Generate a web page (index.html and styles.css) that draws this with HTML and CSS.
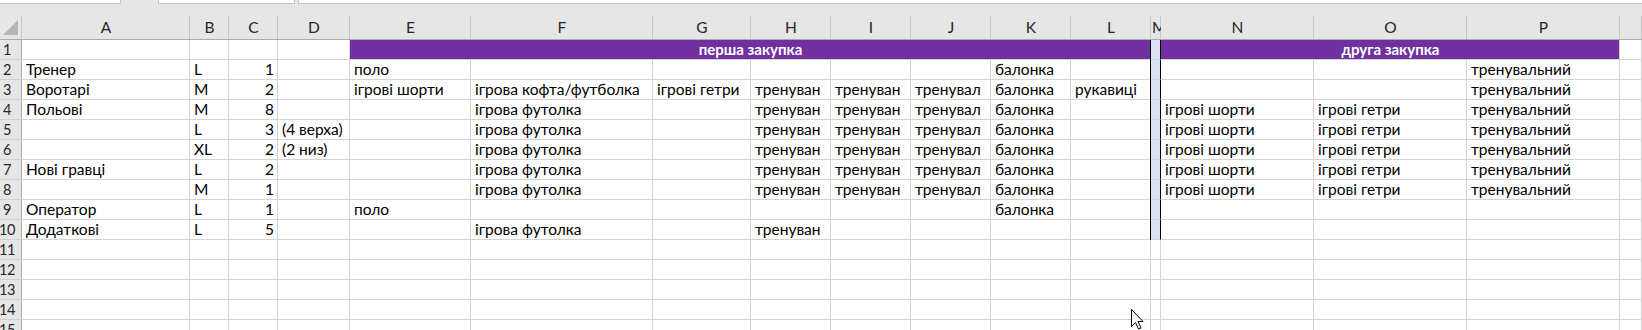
FILE: index.html
```html
<!DOCTYPE html>
<html lang="uk">
<head>
<meta charset="utf-8">
<title>Sheet</title>
<link rel="stylesheet" href="styles.css">
</head>
<body>
<div class="tabs"><div class="tab t1"></div><div class="tab t2"></div><div class="tab t3"></div></div>
<div class="sheet">
<div class="h corner"><svg width="16" height="16" viewBox="0 0 16 16"><polygon points="15,0 15,15 0,15" fill="#b5b5b5"/></svg></div><div class="h">A</div><div class="h">B</div><div class="h">C</div><div class="h">D</div><div class="h">E</div><div class="h">F</div><div class="h">G</div><div class="h">H</div><div class="h">I</div><div class="h">J</div><div class="h">K</div><div class="h">L</div><div class="h hm">M</div><div class="h">N</div><div class="h">O</div><div class="h">P</div><div class="h"></div>

<div class="rh"><span>1</span></div><div class="c"></div><div class="c"></div><div class="c"></div><div class="c"></div><div class="c p p8">перша закупка</div><div class="c s"></div><div class="c p p3">друга закупка</div><div class="c"></div>

<div class="rh"><span>2</span></div><div class="c">Тренер</div><div class="c">L</div><div class="c n">1</div><div class="c"></div><div class="c">поло</div><div class="c"></div><div class="c"></div><div class="c"></div><div class="c"></div><div class="c"></div><div class="c">балонка</div><div class="c"></div><div class="c s"></div><div class="c"></div><div class="c"></div><div class="c">тренувальний</div><div class="c"></div>

<div class="rh"><span>3</span></div><div class="c">Воротарі</div><div class="c">M</div><div class="c n">2</div><div class="c"></div><div class="c">ігрові шорти</div><div class="c">ігрова кофта/футболка</div><div class="c">ігрові гетри</div><div class="c">тренуван</div><div class="c">тренуван</div><div class="c">тренувал</div><div class="c">балонка</div><div class="c">рукавиці</div><div class="c s"></div><div class="c"></div><div class="c"></div><div class="c">тренувальний</div><div class="c"></div>

<div class="rh"><span>4</span></div><div class="c">Польові</div><div class="c">M</div><div class="c n">8</div><div class="c"></div><div class="c"></div><div class="c">ігрова футолка</div><div class="c"></div><div class="c">тренуван</div><div class="c">тренуван</div><div class="c">тренувал</div><div class="c">балонка</div><div class="c"></div><div class="c s"></div><div class="c">ігрові шорти</div><div class="c">ігрові гетри</div><div class="c">тренувальний</div><div class="c"></div>

<div class="rh"><span>5</span></div><div class="c"></div><div class="c">L</div><div class="c n">3</div><div class="c">(4 верха)</div><div class="c"></div><div class="c">ігрова футолка</div><div class="c"></div><div class="c">тренуван</div><div class="c">тренуван</div><div class="c">тренувал</div><div class="c">балонка</div><div class="c"></div><div class="c s"></div><div class="c">ігрові шорти</div><div class="c">ігрові гетри</div><div class="c">тренувальний</div><div class="c"></div>

<div class="rh"><span>6</span></div><div class="c"></div><div class="c">XL</div><div class="c n">2</div><div class="c">(2 низ)</div><div class="c"></div><div class="c">ігрова футолка</div><div class="c"></div><div class="c">тренуван</div><div class="c">тренуван</div><div class="c">тренувал</div><div class="c">балонка</div><div class="c"></div><div class="c s"></div><div class="c">ігрові шорти</div><div class="c">ігрові гетри</div><div class="c">тренувальний</div><div class="c"></div>

<div class="rh"><span>7</span></div><div class="c">Нові гравці</div><div class="c">L</div><div class="c n">2</div><div class="c"></div><div class="c"></div><div class="c">ігрова футолка</div><div class="c"></div><div class="c">тренуван</div><div class="c">тренуван</div><div class="c">тренувал</div><div class="c">балонка</div><div class="c"></div><div class="c s"></div><div class="c">ігрові шорти</div><div class="c">ігрові гетри</div><div class="c">тренувальний</div><div class="c"></div>

<div class="rh"><span>8</span></div><div class="c"></div><div class="c">M</div><div class="c n">1</div><div class="c"></div><div class="c"></div><div class="c">ігрова футолка</div><div class="c"></div><div class="c">тренуван</div><div class="c">тренуван</div><div class="c">тренувал</div><div class="c">балонка</div><div class="c"></div><div class="c s"></div><div class="c">ігрові шорти</div><div class="c">ігрові гетри</div><div class="c">тренувальний</div><div class="c"></div>

<div class="rh"><span>9</span></div><div class="c">Оператор</div><div class="c">L</div><div class="c n">1</div><div class="c"></div><div class="c">поло</div><div class="c"></div><div class="c"></div><div class="c"></div><div class="c"></div><div class="c"></div><div class="c">балонка</div><div class="c"></div><div class="c s"></div><div class="c"></div><div class="c"></div><div class="c"></div><div class="c"></div>

<div class="rh"><span>10</span></div><div class="c">Додаткові</div><div class="c">L</div><div class="c n">5</div><div class="c"></div><div class="c"></div><div class="c">ігрова футолка</div><div class="c"></div><div class="c">тренуван</div><div class="c"></div><div class="c"></div><div class="c"></div><div class="c"></div><div class="c s"></div><div class="c"></div><div class="c"></div><div class="c"></div><div class="c"></div>

<div class="rh"><span>11</span></div><div class="c"></div><div class="c"></div><div class="c"></div><div class="c"></div><div class="c"></div><div class="c"></div><div class="c"></div><div class="c"></div><div class="c"></div><div class="c"></div><div class="c"></div><div class="c"></div><div class="c"></div><div class="c"></div><div class="c"></div><div class="c"></div><div class="c"></div>

<div class="rh"><span>12</span></div><div class="c"></div><div class="c"></div><div class="c"></div><div class="c"></div><div class="c"></div><div class="c"></div><div class="c"></div><div class="c"></div><div class="c"></div><div class="c"></div><div class="c"></div><div class="c"></div><div class="c"></div><div class="c"></div><div class="c"></div><div class="c"></div><div class="c"></div>

<div class="rh"><span>13</span></div><div class="c"></div><div class="c"></div><div class="c"></div><div class="c"></div><div class="c"></div><div class="c"></div><div class="c"></div><div class="c"></div><div class="c"></div><div class="c"></div><div class="c"></div><div class="c"></div><div class="c"></div><div class="c"></div><div class="c"></div><div class="c"></div><div class="c"></div>

<div class="rh"><span>14</span></div><div class="c"></div><div class="c"></div><div class="c"></div><div class="c"></div><div class="c"></div><div class="c"></div><div class="c"></div><div class="c"></div><div class="c"></div><div class="c"></div><div class="c"></div><div class="c"></div><div class="c"></div><div class="c"></div><div class="c"></div><div class="c"></div><div class="c"></div>

<div class="rh"><span>15</span></div><div class="c"></div><div class="c"></div><div class="c"></div><div class="c"></div><div class="c"></div><div class="c"></div><div class="c"></div><div class="c"></div><div class="c"></div><div class="c"></div><div class="c"></div><div class="c"></div><div class="c"></div><div class="c"></div><div class="c"></div><div class="c"></div><div class="c"></div>
</div>
<svg class="cursor" width="13" height="21" viewBox="0 0 13 21"><path d="M0.5 0.5 L0.5 17.5 L4.5 13.5 L7.5 20 L10 19 L7 12.5 L12 12.5 Z" fill="#fff" stroke="#000" stroke-width="1" stroke-linejoin="miter"/></svg>
</body>
</html>
```
FILE: styles.css
```css
* { box-sizing: border-box; margin: 0; padding: 0; }
html, body { width: 1642px; height: 330px; overflow: hidden; background: #fff; }
body { font-family: Lato, "Liberation Sans", sans-serif; font-size: 15.5px; color: #000; position: relative; }

.tabs { display: flex; height: 4px; background: #e6e6e6; }
.tab { height: 4px; background: #fff; border: 1px solid #c6c6c6; border-top: 0; }
.t1 { width: 121px; border-left: 0; }
.t2 { width: 137px; margin-left: 37px; }
.t3 { flex: 1; margin-left: 3px; border-right: 0; }

.sheet {
  display: grid;
  grid-template-columns: 22px 168px 39px 49px 72px 121px 182px 98px 80px 80px 80px 80px 80px 10px 153px 153px 153px 22px;
  grid-template-rows: 36px repeat(15, 20px);
}

.h {
  background: linear-gradient(#c6c6c6, #c6c6c6) right bottom / 1px 23px no-repeat, #e6e6e6;
  border-bottom: 1px solid #ababab;
  text-align: center;
  padding-top: 14px;
  line-height: 19px;
  color: #262626;
  overflow: hidden;
  white-space: nowrap;
}
.hm { padding-left: 1px; text-align: left; }
.corner { padding: 16px 0 0 3px; }
.corner svg { display: block; }

.rh {
  background: #e6e6e6;
  border-right: 1px solid #ababab;
  border-bottom: 1px solid #cfcfcf;
  overflow: hidden;
  line-height: 19px;
  font-size: 14.5px;
  color: #262626;
}
.rh span { display: block; width: 30px; margin-left: -8px; text-align: center; letter-spacing: -0.5px; }

.c {
  border-right: 1px solid #d4d4d4;
  border-bottom: 1px solid #d4d4d4;
  padding: 0 3px 0 4px;
  line-height: 19px;
  white-space: nowrap;
  overflow: hidden;
}
.n { text-align: right; }

.p { background: #7030a0; color: #fff; font-weight: 700; text-align: center; font-size: 15px; }
.p8 { grid-column: span 8; }
.p3 { grid-column: span 3; }

.s { background: #dbe1f1; border-right: 1px solid #000; box-shadow: -1px 0 0 #000; }

.cursor { position: absolute; left: 1131px; top: 309px; }
```
